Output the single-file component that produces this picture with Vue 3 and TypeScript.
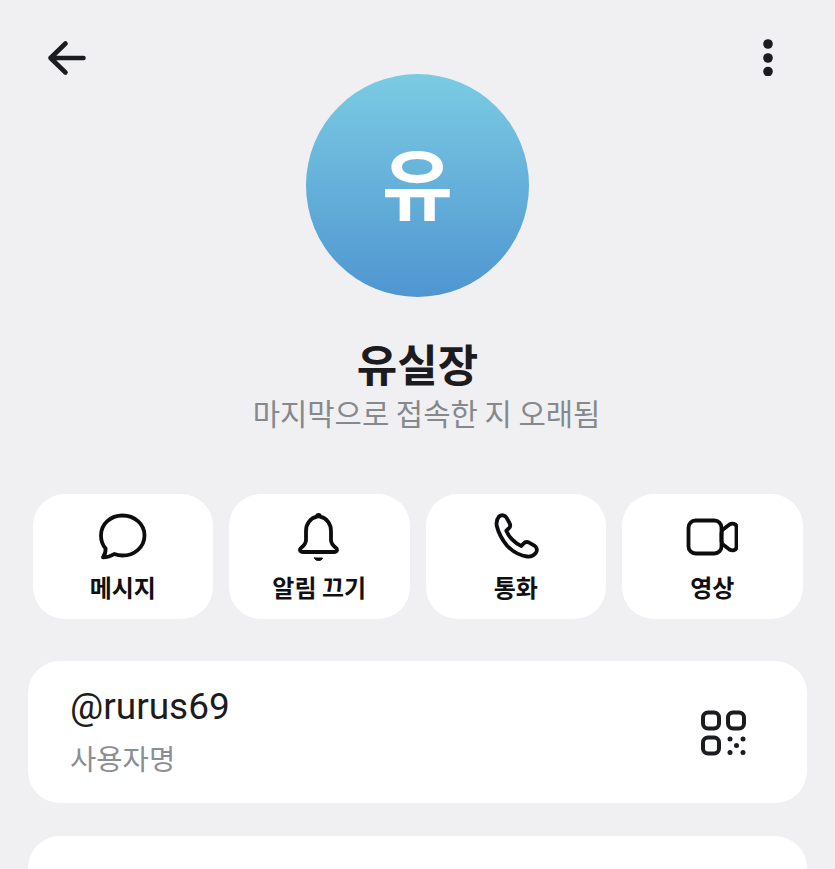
<script setup lang="ts">
const actions = [
  { label: '메시지', icon: 'message' },
  { label: '알림 끄기', icon: 'bell' },
  { label: '통화', icon: 'phone' },
  { label: '영상', icon: 'video' },
]
</script>

<template>
  <div class="page">
    <header class="topbar">
      <button class="icon-btn" aria-label="back">
        <svg width="40" height="40" viewBox="0 0 40 40" fill="none" stroke="#1b1c20" stroke-width="4.600" stroke-linecap="round" stroke-linejoin="round">
          <path d="M36.500 20H3.500M18.500 5.500 3.500 20l15 14.500" />
        </svg>
      </button>
      <button class="icon-btn" aria-label="more">
        <svg width="10" height="38" viewBox="0 0 10 38" fill="#1b1c20">
          <circle cx="5" cy="6" r="4.800" />
          <circle cx="5" cy="20" r="4.800" />
          <circle cx="5" cy="33.500" r="4.800" />
        </svg>
      </button>
    </header>

    <div class="avatar">유</div>
    <h1 class="name">유실장</h1>
    <p class="status">마지막으로 접속한 지 오래됨</p>

    <div class="actions">
      <button v-for="a in actions" :key="a.label" class="action">
        <svg class="action-icon" width="52" height="52" viewBox="0 0 52 52" fill="none" stroke="#0d0d0f" stroke-width="3.800" stroke-linecap="round" stroke-linejoin="round">
          <path v-if="a.icon === 'message'" d="M25.500 4.500C37.500 4.500 47.500 13 47.500 24.500S37.500 44.500 25.500 44.500c-3 0-5.500-.5-8.200-1.500-3 2-7 3.300-11.300 3.300 1.500-2.200 2.800-5.500 2.600-8.800C5.500 34 4 29.500 4 24.500 4 13 13.500 4.500 25.500 4.500Z" />
          <template v-else-if="a.icon === 'bell'">
            <path d="M25.500 4c1 0 1.500.5 1.500 1.700 7 1.500 11 7.500 11 14.300v9c0 3 1.500 5 4.500 7.500 2.500 2 1.800 4.500-1.500 4.500H10c-3.300 0-4-2.500-1.500-4.500 3-2.500 4.500-4.500 4.500-7.500v-9c0-6.800 4-12.800 11-14.300C24 4.500 24.500 4 25.500 4Z" />
            <path d="M21.500 47h8c-.5 1.800-2 2.500-4 2.500s-3.500-.7-4-2.500Z" fill="#0d0d0f" stroke-width="1" />
          </template>
          <path v-else-if="a.icon === 'phone'" d="M9 5.500c2.500-2 6-1.500 7.500 1.200l3 5.300c1.200 2 .7 4-.8 5.500l-2.400 2.200c1.500 3.500 3.500 6.500 6 9 2.500 2.600 5.500 4.800 9 6.300l2.300-2.500c1.500-1.500 3.500-2 5.500-.8l5.300 3c2.700 1.500 3.300 5 1.200 7.500-2 2.300-5 3.800-8.300 3.300-7.500-1-14.500-5-20-10.500C12.800 29.500 8.500 22.300 6.800 15c-.8-3.700.2-7 2.200-9.500Z" />
          <template v-else>
            <rect x="2.500" y="9.500" width="33" height="33" rx="7" />
            <path d="M35.500 22c0-1.500.5-2.500 1.500-3.500l6.500-5c2.500-1.500 7-1 7 2.500v20c0 3.500-4.500 4-7 2.500l-6.500-5c-1-1-1.500-2-1.500-3.500Z" />
          </template>
        </svg>
        <span class="action-label">{{ a.label }}</span>
      </button>
    </div>

    <section class="card info">
      <div>
        <div class="handle">@rurus69</div>
        <div class="caption">사용자명</div>
      </div>
      <svg class="qr" width="46" height="46" viewBox="0 0 46 46" fill="none" stroke="#1b1c20" stroke-width="4">
        <rect x="2" y="2.500" width="16" height="16" rx="5" />
        <rect x="27" y="2.500" width="16" height="16" rx="5" />
        <rect x="2" y="27.500" width="16" height="16" rx="5" />
        <g fill="#1b1c20" stroke="none">
          <circle cx="29" cy="29" r="2.500" />
          <circle cx="42" cy="29" r="2.500" />
          <circle cx="35.500" cy="35.500" r="2.500" />
          <circle cx="29" cy="42.500" r="2.500" />
          <circle cx="42" cy="42.500" r="2.500" />
        </g>
      </svg>
    </section>

    <section class="card next"></section>
  </div>
</template>

<style>
html, body {
  margin: 0;
  background: #f0f0f3;
}
</style>

<style scoped>
.page {
  height: 869px;
  overflow: hidden;
  background: #f0f0f3;
  display: flex;
  flex-direction: column;
  align-items: center;
  font-family: "Noto Sans CJK KR", "Noto Sans", Roboto, sans-serif;
}

.topbar {
  align-self: stretch;
  height: 74px;
  flex: none;
  display: flex;
  justify-content: space-between;
  align-items: flex-start;
  padding: 38px 62px 0 47px;
  box-sizing: border-box;
}

.icon-btn {
  background: none;
  border: none;
  padding: 0;
  line-height: 0;
}

.avatar {
  width: 223px;
  height: 223px;
  flex: none;
  border-radius: 50%;
  background: linear-gradient(180deg, #7bcbe3 0%, #4f96d1 100%);
  color: #fff;
  font-size: 77px;
  font-weight: 700;
  line-height: 214px;
  text-align: center;
}

.name {
  margin: 37px 0 0;
  font-size: 44px;
  line-height: 58px;
  font-weight: 700;
  color: #1c1c20;
}

.status {
  margin: 1px 0 0 18px;
  font-size: 29.700px;
  line-height: 40px;
  color: #85888c;
}

.actions {
  margin-top: 61px;
  display: flex;
  gap: 16px;
}

.action {
  width: 180.500px;
  height: 125px;
  box-sizing: border-box;
  background: #fff;
  border: none;
  border-radius: 32px;
  padding: 17px 0 0;
  display: flex;
  flex-direction: column;
  align-items: center;
  font-family: inherit;
}

.action-label {
  margin-top: 7px;
  font-size: 24px;
  line-height: 34px;
  font-weight: 700;
  color: #101012;
}

.card {
  width: 779px;
  box-sizing: border-box;
  flex: none;
  background: #fff;
  border-radius: 32px;
}

.info {
  margin-top: 42px;
  height: 142px;
  padding: 0 60px 2px 42px;
  display: flex;
  align-items: center;
  justify-content: space-between;
}

.handle {
  font-family: Roboto, sans-serif;
  font-size: 37px;
  line-height: 48px;
  color: #1c1c20;
  margin-top: -3px;
}

.caption {
  margin-top: 8px;
  font-size: 28.600px;
  line-height: 38px;
  color: #8b8e93;
}

.qr {
  margin-top: 4px;
}

.next {
  margin-top: 33px;
  height: 100px;
}
</style>
